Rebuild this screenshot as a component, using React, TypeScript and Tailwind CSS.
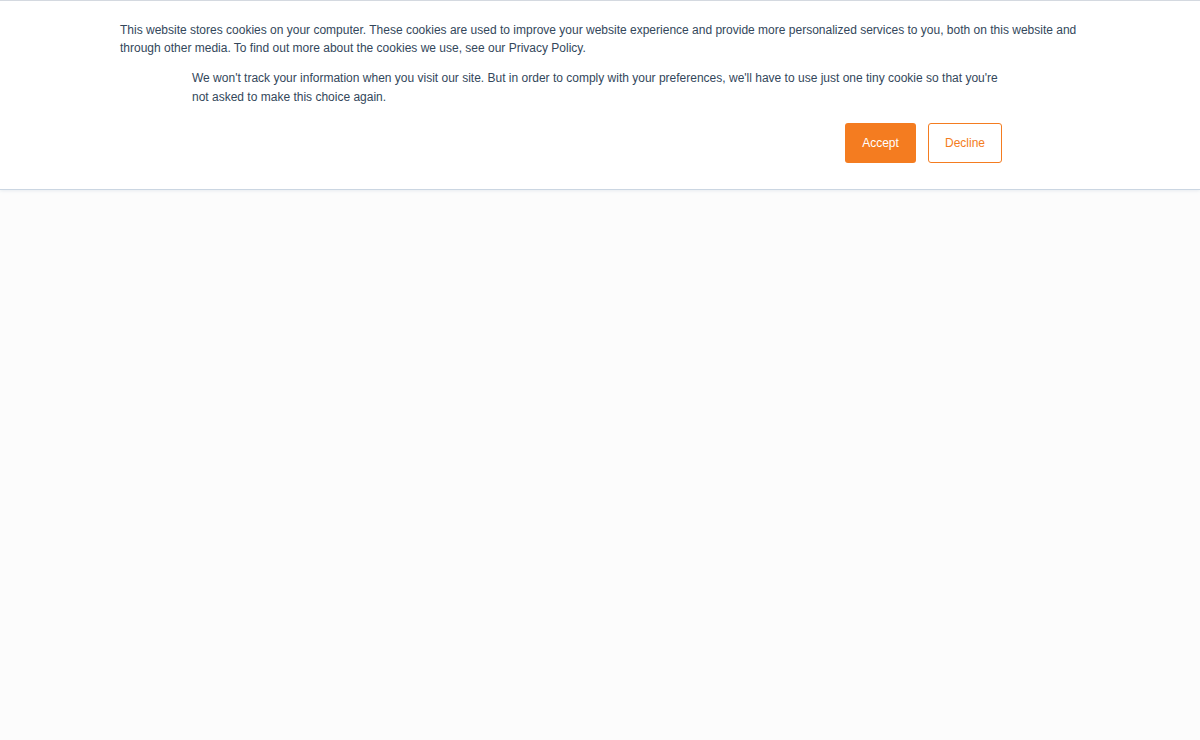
import React from "react";

const CookieBanner = () => {
  return (
    <div className="w-full bg-white border-t border-b border-t-[#d4d9e0] border-b-[#cbd6e2] shadow-[0_1px_3px_rgba(203,214,226,0.4)]">
      <div className="w-[960px] mx-auto pt-[20px] pb-[26px]">
        <p className="text-[12px] leading-[18px] text-[#33475b]">
          This website stores cookies on your computer. These cookies are used to improve your website experience and
          provide more personalized services to you, both on this website and through other media. To find out more
          about the cookies we use, see our Privacy Policy.
        </p>
        <div className="w-[810px] ml-[72px] mt-[12px]">
          <p className="text-[12px] leading-[19px] text-[#33475b]">
            We won't track your information when you visit our site. But in order to comply with your preferences,
            we'll have to use just one tiny cookie so that you're not asked to make this choice again.
          </p>
          <div className="flex justify-end gap-3 mt-[16px]">
            <button className="h-[40px] w-[71px] rounded-[3px] bg-[#f47c20] text-white text-[12px]">Accept</button>
            <button className="h-[40px] w-[74px] rounded-[3px] border border-[#f47c20] bg-white text-[#f47c20] text-[12px]">
              Decline
            </button>
          </div>
        </div>
      </div>
    </div>
  );
};

export default function App() {
  return (
    <div
      className="min-h-[740px] bg-[#fcfcfc]"
      style={{ fontFamily: '"Liberation Sans", Arial, sans-serif' }}
    >
      <CookieBanner />
    </div>
  );
}
